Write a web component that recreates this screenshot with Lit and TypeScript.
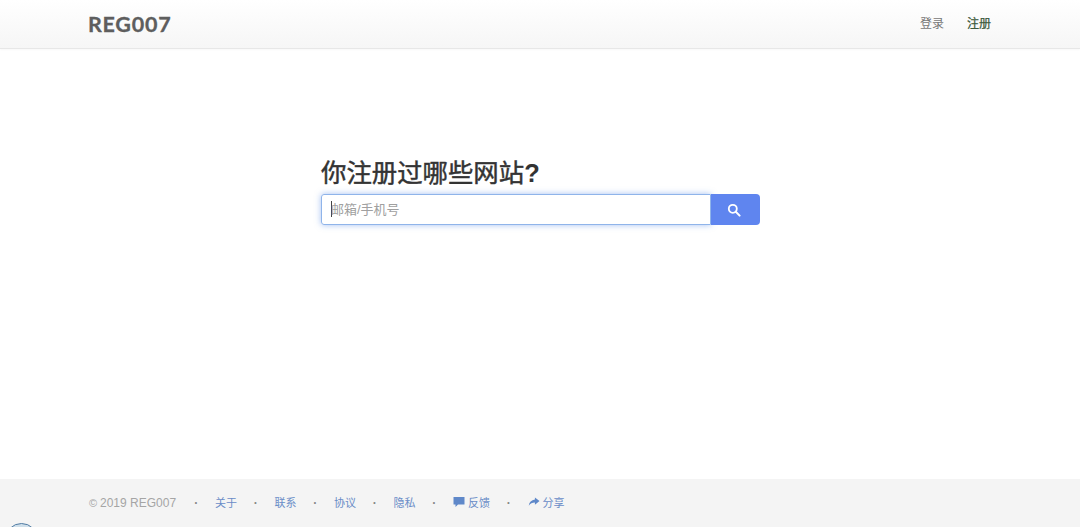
import { LitElement, html, css } from "lit";
import { customElement } from "lit/decorators.js";

@customElement("app-root")
export class AppRoot extends LitElement {
  static styles = css`
    :host {
      display: flex;
      flex-direction: column;
      height: 527px;
      overflow: hidden;
      position: relative;
      background: #fff;
      font-family: "Liberation Sans", "Noto Sans CJK SC", sans-serif;
    }
    .nav {
      flex: none;
      box-sizing: border-box;
      height: 49px;
      background: linear-gradient(#ffffff, #f6f6f6);
      border-bottom: 1px solid #e7e7e7;
      box-shadow: 0 1px 2px rgba(0, 0, 0, 0.03);
      display: flex;
      align-items: center;
      padding: 0 89px 3px 88px;
    }
    .brand {
      font-family: "Lato", sans-serif;
      font-weight: 700;
      font-size: 21.5px;
      letter-spacing: 0.75px;
      color: #5e5e5e;
      -webkit-text-stroke: 0.3px #5e5e5e;
      flex: 1;
      padding-top: 3px;
    }
    .nav a {
      font-size: 12px;
      color: #777;
      margin-left: 23px;
    }
    .nav a.on {
      color: #3c5a3c;
      font-weight: 400;
      -webkit-text-stroke: 0.25px #3c5a3c;
    }
    main {
      flex: 1;
      display: flex;
      flex-direction: column;
      padding: 107px 0 0 321px;
    }
    h1 {
      margin: 0 0 4px;
      font-size: 25.4px;
      line-height: 34px;
      font-weight: 400;
      color: #333;
      -webkit-text-stroke: 0.45px #333;
    }
    h1 b {
      font-weight: 700;
      -webkit-text-stroke: 0;
    }
    .search {
      display: flex;
      width: 439px;
      height: 31px;
    }
    .input {
      flex: 1;
      box-sizing: border-box;
      border: 1px solid #8fb4ea;
      border-radius: 3px 0 0 3px;
      box-shadow: 0 0 6px rgba(90, 140, 230, 0.55);
      display: flex;
      align-items: center;
      padding: 0 0 2px 9px;
      font-size: 13px;
      color: #a0a0a0;
    }
    .caret {
      width: 1px;
      height: 16px;
      background: #444;
      margin-right: -1px;
    }
    .btn {
      flex: none;
      width: 49px;
      background: #5f85ef;
      border-radius: 0 4px 4px 0;
      display: flex;
      align-items: center;
      justify-content: center;
      padding-right: 3px;
      box-sizing: border-box;
    }
    footer {
      flex: none;
      height: 48px;
      background: #f4f4f4;
      box-sizing: border-box;
      padding: 0 0 1px 89px;
      display: flex;
      align-items: center;
      font-size: 11px;
      color: #a5a5a5;
    }
    .copy {
      font-size: 12px;
      margin-right: 1.5px;
    }
    .copy i {
      display: inline-block;
      width: 11px;
      font-style: normal;
      font-size: 11px;
    }
    .dot {
      width: 37.5px;
      text-align: center;
      color: #888;
      font-size: 12px;
      font-weight: 700;
    }
    footer a {
      color: #6a8cc7;
      display: inline-flex;
      align-items: center;
      gap: 3px;
      padding-bottom: 2px;
    }
    .badge {
      position: absolute;
      left: 5px;
      top: 523px;
      width: 33px;
      height: 33px;
      box-sizing: border-box;
      border-radius: 50%;
      border: 1.5px solid #4f7ba3;
      background: #cfdfea;
    }
  `;

  render() {
    return html`
      <div class="nav">
        <div class="brand">REG007</div>
        <a>登录</a>
        <a class="on">注册</a>
      </div>
      <main>
        <h1>你注册过哪些网站<b>?</b></h1>
        <div class="search">
          <div class="input"><span class="caret"></span>邮箱/手机号</div>
          <div class="btn">
            <svg width="14" height="14" viewBox="0 0 14 14" fill="none" stroke="#fff">
              <circle cx="5.8" cy="5.8" r="4" stroke-width="1.8"></circle>
              <path d="M8.8 8.8 L12.6 12.6" stroke-width="2" stroke-linecap="round"></path>
            </svg>
          </div>
        </div>
      </main>
      <footer>
        <span class="copy"><i>©</i>2019 REG007</span>
        <span class="dot">·</span>
        <a>关于</a>
        <span class="dot">·</span>
        <a>联系</a>
        <span class="dot">·</span>
        <a>协议</a>
        <span class="dot">·</span>
        <a>隐私</a>
        <span class="dot">·</span>
        <a>
          <svg width="12" height="12" viewBox="0 0 12 12" fill="#5f88c9">
            <path d="M0.5 1 H11.5 V8.5 H5 L2.5 11 V8.5 H0.5 Z"></path>
          </svg>
          反馈
        </a>
        <span class="dot">·</span>
        <a>
          <svg width="12" height="12" viewBox="0 0 13 12" fill="#5f88c9">
            <path d="M7.5 1 L12.5 5 L7.5 9 V6.6 C4.5 6.6 2.5 7.6 0.8 10 C1.3 6.4 3.6 3.8 7.5 3.4 Z"></path>
          </svg>
          分享
        </a>
      </footer>
      <div class="badge"></div>
    `;
  }
}
